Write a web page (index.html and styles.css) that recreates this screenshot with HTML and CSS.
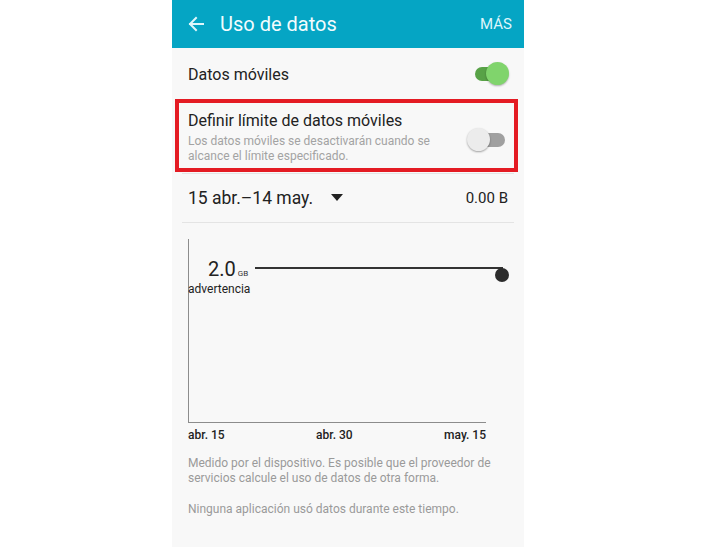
FILE: index.html
```html
<!DOCTYPE html>
<html lang="es">
<head>
  <meta charset="UTF-8" />
  <meta name="viewport" content="width=device-width, initial-scale=1.0" />
  <title>Uso de datos</title>
  <link rel="stylesheet" href="styles.css">
</head>
<body>
  <div class="screen">
    <!-- Barra superior -->
    <header class="app-bar">
      <svg class="back" width="18" height="18" viewBox="0 0 18 18">
        <path d="M16 9H3M9 3L3 9l6 6" fill="none" stroke="#dff6fb" stroke-width="2" stroke-linecap="square"/>
      </svg>
      <span class="app-title">Uso de datos</span>
      <span class="app-more">MÁS</span>
    </header>

    <!-- Interruptor de datos -->
    <div class="row row-switch">
      <span class="row-label">Datos móviles</span>
      <span class="toggle on"><span class="knob"></span></span>
    </div>

    <div class="limit-box">
      <div class="limit-text">
        <div class="row-label">Definir límite de datos móviles</div>
        <div class="row-sub">Los datos móviles se desactivarán cuando se alcance el límite especificado.</div>
      </div>
      <span class="toggle off"><span class="knob"></span></span>
    </div>
    <div class="divider"></div>

    <!-- Ciclo -->
    <div class="row row-cycle">
      <span class="cycle">15 abr.–14 may.<span class="caret"></span></span>
      <span class="total">0.00 B</span>
    </div>
    <div class="divider"></div>

    <!-- Gráfico de uso -->
    <div class="chart">
      <div class="warn-line"></div>
      <div class="warn-dot"></div>
      <div class="warn-value">2.0<small>GB</small></div>
      <div class="warn-label">advertencia</div>
    </div>
    <div class="axis">
      <span>abr. 15</span>
      <span>abr. 30</span>
      <span>may. 15</span>
    </div>

    <p class="note">Medido por el dispositivo. Es posible que el proveedor de servicios calcule el uso de datos de otra forma.</p>
    <p class="note">Ninguna aplicación usó datos durante este tiempo.</p>
  </div>
</body>
</html>
```

FILE: styles.css
```css
body {
  margin: 0;
  background: #fff;
  font-family: Roboto, "Noto Sans", sans-serif;
  color: #222;
}
.screen {
  width: 352px;
  height: 547px;
  margin-left: 172px;
  background: #f8f8f8;
  overflow: hidden;
}
/* Barra superior */
.app-bar {
  height: 48px;
  background: #05a5c4;
  display: flex;
  align-items: center;
  padding: 0 12px 0 15px;
  color: #fff;
}
.back {
  flex: none;
}
.app-title {
  margin-left: 15px;
  font-size: 20px;
  flex: 1;
  color: #f2fcfe;
}
.app-more {
  font-size: 15px;
  color: #dff6fb;
}
/* Filas */
.row {
  display: flex;
  align-items: center;
  justify-content: space-between;
  padding: 0 16px;
}
.row-switch {
  height: 51px;
  padding-top: 1px;
  box-sizing: border-box;
}
.row-label {
  font-size: 16px;
  color: #222;
}
.limit-box {
  margin: 0 6px 0 3px;
  height: 65px;
  border: 4px solid #e41b23;
  display: flex;
  align-items: flex-start;
  padding: 0 9px;
}
.limit-text {
  flex: 1;
  padding-top: 8px;
}
.limit-text .row-label {
  line-height: 20px;
  margin-bottom: 3px;
}
.row-sub {
  font-size: 12px;
  line-height: 15px;
  color: #a3a3a3;
  padding-right: 24px;
}
.divider {
  height: 1px;
  background: #e4e4e4;
  margin: 1px 10px 0;
}
/* Interruptores */
.toggle {
  position: relative;
  width: 30px;
  height: 14px;
  border-radius: 7px;
  flex: none;
}
.toggle .knob {
  position: absolute;
  top: -5px;
  width: 23px;
  height: 23px;
  border-radius: 50%;
  box-shadow: 0 1px 2px rgba(0,0,0,0.3);
}
.toggle.on {
  background: #58a247;
  margin-right: 3px;
}
.toggle.on .knob {
  right: -4px;
  background: #80d46c;
}
.toggle.off {
  background: #a0a0a0;
  margin-top: 30px;
  margin-right: 0;
  width: 28px;
}
.toggle.off .knob {
  left: -10px;
  background: #ececec;
  box-shadow: 0 1px 2px rgba(0,0,0,0.35);
}
/* Ciclo */
.row-cycle {
  height: 47px;
}
.cycle {
  font-size: 17.5px;
  color: #222;
  display: flex;
  align-items: center;
}
.caret {
  width: 0;
  height: 0;
  margin-left: 18px;
  border-left: 6px solid transparent;
  border-right: 6px solid transparent;
  border-top: 7px solid #222;
}
.total {
  font-size: 15px;
  color: #222;
}
/* Gráfico */
.chart {
  position: relative;
  margin: 16px 0 0 16px;
  width: 297px;
  height: 183px;
  border-left: 1.5px solid #8c8c8c;
  border-bottom: 1.5px solid #8c8c8c;
}
.warn-line {
  position: absolute;
  top: 28px;
  left: 66px;
  width: 248px;
  height: 2px;
  background: #333;
}
.warn-dot {
  position: absolute;
  top: 29px;
  left: 306px;
  width: 14px;
  height: 14px;
  border-radius: 50%;
  background: #2c2c2c;
}
.warn-value {
  position: absolute;
  top: 18px;
  left: 19px;
  font-size: 20px;
  line-height: 24px;
  color: #222;
}
.warn-value small {
  font-size: 8px;
  margin-left: 2px;
  color: #333;
}
.warn-label {
  position: absolute;
  top: 43px;
  left: -1px;
  font-size: 12px;
  color: #222;
}
.axis {
  display: flex;
  justify-content: space-between;
  width: 298px;
  margin: 4px 0 0 16px;
  font-size: 12px;
  font-weight: 500;
  color: #222;
  line-height: 16px;
}
.note {
  margin: 13px 16px 0;
  font-size: 12px;
  line-height: 15px;
  color: #9a9a9a;
}
.note + .note {
  margin-top: 16px;
}
```
